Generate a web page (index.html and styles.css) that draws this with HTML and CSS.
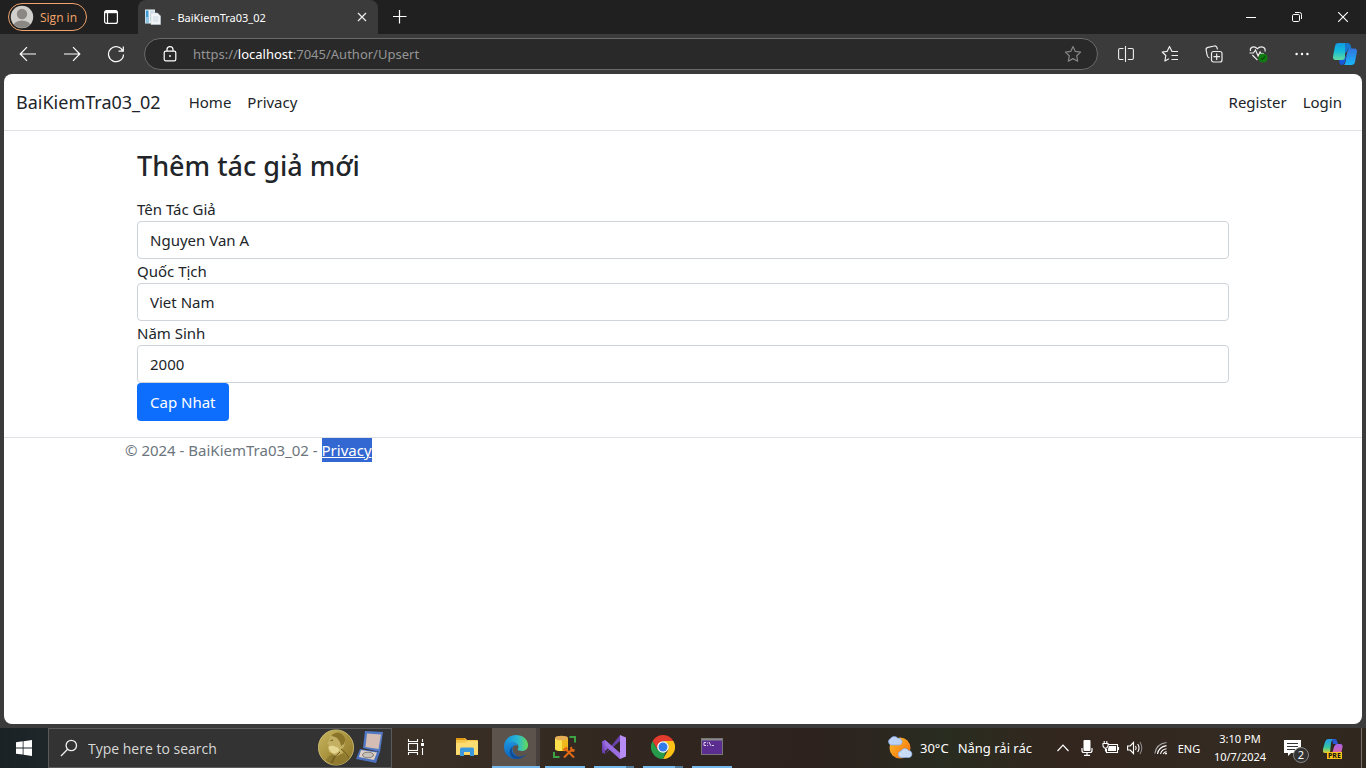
FILE: index.html
```html
<!DOCTYPE html>
<html lang="vi">
<head>
<meta charset="utf-8">
<title>- BaiKiemTra03_02</title>
<link rel="stylesheet" href="styles.css">
</head>
<body>
<div class="desktop">
  <div class="tabstrip">
    <button class="profile">
      <svg width="24" height="24" viewBox="0 0 24 24"><defs><clipPath id="face"><circle cx="12" cy="12" r="11"/></clipPath></defs><circle cx="12" cy="12" r="11.2" fill="#d0cfcb"/><g clip-path="url(#face)" fill="#8b8782"><circle cx="12" cy="9" r="5.2"/><ellipse cx="12" cy="21" rx="8.5" ry="5.6"/></g></svg>
      <span>Sign in</span>
    </button>
    <button class="tab-actions" aria-label="Tab actions">
      <svg width="16" height="16" viewBox="0 0 16 16" fill="none" stroke="#fff" stroke-width="1.2"><rect x="1.600" y="1.600" width="12.800" height="12.800" rx="2"/><path d="M4.500 4v10"/><path d="M2 3h12" stroke-width="2.400"/></svg>
    </button>
    <div class="tab">
      <svg width="16" height="16" viewBox="0 0 16 16"><path d="M0 .5h10v14H0z" fill="#e9f2f7"/><path d="M.8 1.500h2.700v12.500H.8z" fill="#3f9bd2"/><path d="M.8 8h2.700v6H.8z" fill="#8fc6e6"/><path d="M5 1.500h4.500V12H5z" fill="#cfdde6"/><path d="M6 4h6.500L15.500 7v8.500H6z" fill="#f1f5f8" stroke="#c9d3da" stroke-width=".6"/><path d="M8 8h5.500M8 10h5.500M8 12h5.500" stroke="#c5d1d9" stroke-width=".8"/></svg>
      <span class="tab-title">- BaiKiemTra03_02</span>
      <button class="tab-close" aria-label="Close tab"><svg width="10" height="10" viewBox="0 0 10 10" stroke="#eee" stroke-width="1.200"><path d="M1 1l8 8M9 1L1 9"/></svg></button>
    </div>
    <button class="new-tab" aria-label="New tab"><svg width="14" height="14" viewBox="0 0 14 14" stroke="#fff" stroke-width="1.200"><path d="M6.500 0v13.500M0 6.500h13.500"/></svg></button>
    <div class="window-buttons">
      <button aria-label="Minimize"><svg width="10" height="10" viewBox="0 0 10 10" stroke="#fff"><path d="M0 5.500h10"/></svg></button>
      <button aria-label="Restore"><svg width="10" height="10" viewBox="0 0 10 10" fill="none" stroke="#fff"><rect x=".5" y="2.500" width="7" height="7" rx="1.200"/><path d="M3 .5h4.500a2 2 0 0 1 2 2V7"/></svg></button>
      <button aria-label="Close"><svg width="10" height="10" viewBox="0 0 10 10" stroke="#fff" stroke-width="1.100"><path d="M0 0l10 10M10 0L0 10"/></svg></button>
    </div>
  </div>

  <div class="toolbar">
    <button class="tool" aria-label="Back"><svg width="18" height="16" viewBox="0 0 18 16" fill="none" stroke="#fff" stroke-width="1.200"><path d="M17 8H1.500M8 1.200L1.200 8 8 14.800"/></svg></button>
    <button class="tool" aria-label="Forward"><svg width="18" height="16" viewBox="0 0 18 16" fill="none" stroke="#fff" stroke-width="1.200"><path d="M1 8h15.500M10 1.200L16.800 8 10 14.800"/></svg></button>
    <button class="tool" aria-label="Refresh"><svg width="18" height="18" viewBox="0 0 18 18" fill="none" stroke="#fff" stroke-width="1.200"><path d="M15.800 6A7.500 7.500 0 1 0 16.500 9.400M16.300 1.500V6.200h-4.800"/></svg></button>
    <div class="address">
      <svg width="14" height="16" viewBox="0 0 14 16" fill="none" stroke="#fff" stroke-width="1.200"><rect x="1.200" y="5.200" width="11.600" height="9.600" rx="1.600"/><path d="M4 5V3.600a3 3 0 0 1 6 0V5"/><circle cx="7" cy="10" r=".9" fill="#fff" stroke="none"/></svg>
      <span class="url">https://<b>localhost</b>:7045/Author/Upsert</span>
      <button class="star" aria-label="Add to favorites"><svg width="18" height="18" viewBox="0 0 18 18" fill="none" stroke="#858585" stroke-width="1.200" stroke-linejoin="round"><path d="M9 1.500l2.300 4.900 5.300.7-3.900 3.700 1 5.400L9 13.600l-4.700 2.600 1-5.400L1.400 7.100l5.300-.7z"/></svg></button>
    </div>
    <div class="tools-right">
      <button class="tool" aria-label="Split screen"><svg width="16" height="16" viewBox="0 0 16 16" fill="none" stroke="#eee" stroke-width="1.100"><path d="M5.500 2.500H2A1.400 1.400 0 0 0 .6 3.900v8.200A1.400 1.400 0 0 0 2 13.500h3.500M9.800 2.500H14a1.400 1.400 0 0 1 1.400 1.400v8.200a1.400 1.400 0 0 1-1.400 1.400H9.800M7.500 0v16"/></svg></button>
      <button class="tool" aria-label="Favorites"><svg width="18" height="18" viewBox="0 0 18 18" fill="none" stroke="#eee" stroke-width="1.200" stroke-linejoin="round"><path d="M11 6.400L8.500 1.500 6.200 6.300l-5 .7 3.600 3.500-.9 5.500 4-2.200M10.500 6.500H17M10.500 10.500H17M10.500 14.500H17"/></svg></button>
      <button class="tool" aria-label="Collections"><svg width="18" height="18" viewBox="0 0 18 18" fill="none" stroke="#eee" stroke-width="1.200"><rect x="6.500" y="6.500" width="10.500" height="10.500" rx="2"/><path d="M11.700 8.500v6.500M8.500 11.700H15M4.500 13C3 12.500 2.400 11.500 2.100 10L1.100 5C.9 3.500 1.600 2.700 2.900 2.400L9.500 1C11 .7 12 1.900 12.500 4.500"/></svg></button>
      <button class="tool" aria-label="Browser essentials"><svg width="20" height="18" viewBox="0 0 20 18" fill="none" stroke="#eee" stroke-width="1.200"><path d="M2.500 6C1.500 2 6 .4 9.500 3.700 12.500 .4 18 2 17 6.500M4.300 10L9.500 15.200M1.500 8h4l2-3 2.600 6 2-4 1 1.500H16"/><circle cx="15" cy="13" r="4.600" fill="#107c10" stroke="none"/><path d="M13 13.200l1.400 1.300 2.600-3" stroke="#0a4a0a"/></svg></button>
      <button class="tool" aria-label="Settings and more"><svg width="14" height="4" viewBox="0 0 14 4" fill="#fff"><circle cx="1.600" cy="2" r="1.200"/><circle cx="7" cy="2" r="1.200"/><circle cx="12.400" cy="2" r="1.200"/></svg></button>
      <button class="tool copilot" aria-label="Copilot"><svg width="24" height="24" viewBox="0 0 24 24"><defs><linearGradient id="cpA" x2="0" y2="1"><stop stop-color="#1199e0"/><stop offset=".45" stop-color="#13b9da"/><stop offset="1" stop-color="#63dba0"/></linearGradient><linearGradient id="cpB" x2="0" y2="1"><stop stop-color="#3173dc"/><stop offset="1" stop-color="#18b7fb"/></linearGradient></defs><path d="M9 10l4-9h1.500q2.500 0 3.200 2.500L18.500 7H15l-2 4z" fill="#1577cf"/><path d="M6 17h5l3-5-2 8q-1 3-3 3-2 0-2.500-2z" fill="#1558dc"/><path d="M5.500 1H13q-1 .6-1 3v11q0 3-3 3H2.500Q-.5 18 .1 14L2 4Q2.700 1 5.500 1z" fill="url(#cpA)"/><path d="M18.500 23H11q1-.6 1.500-3l2-11Q15 6.500 17.500 6.500h4Q24.500 6.500 23.900 10L22 20Q21.300 23 18.500 23z" fill="url(#cpB)"/></svg></button>
    </div>
  </div>

  <div class="page">
    <header class="navbar">
      <a class="brand" href="#">BaiKiemTra03_02</a>
      <nav class="nav-main"><a href="#">Home</a><a href="#">Privacy</a></nav>
      <nav class="nav-user"><a href="#">Register</a><a href="#">Login</a></nav>
    </header>
    <main class="container">
      <form class="author-form">
        <h1>Thêm tác giả mới</h1>
        <label for="name">Tên Tác Giả</label>
        <input id="name" type="text" value="Nguyen Van A">
        <label for="country">Quốc Tịch</label>
        <input id="country" type="text" value="Viet Nam">
        <label for="born">Năm Sinh</label>
        <input id="born" type="text" value="2000">
        <button class="submit" type="button">Cap Nhat</button>
      </form>
    </main>
    <footer class="footer"><div class="container">© 2024 - BaiKiemTra03_02 - <a href="#">Privacy</a></div></footer>
  </div>

  <div class="taskbar">
    <button class="start" aria-label="Start"><svg width="16" height="16" viewBox="0 0 16 16" fill="#fff"><path d="M0 2.200L6.700 1.300v6.200H0zM7.500 1.200L16 0v7.500H7.500zM0 8.400h6.700v6.200L0 13.700zM7.500 8.400H16V16l-8.500-1.200z"/></svg></button>
    <label class="search">
      <svg width="18" height="18" viewBox="0 0 18 18" fill="none" stroke="#eee" stroke-width="1.300"><circle cx="11.300" cy="6.500" r="5.200"/><path d="M7.600 10.300L1 17"/></svg>
      <input type="text" placeholder="Type here to search" aria-label="Search">
      <svg width="66" height="38" viewBox="0 0 66 38"><defs><linearGradient id="gold" x2="1" y2="1"><stop stop-color="#c9b860"/><stop offset=".5" stop-color="#a8923e"/><stop offset="1" stop-color="#8d762b"/></linearGradient></defs><circle cx="18" cy="18.500" r="17.600" fill="url(#gold)" stroke="#d6c776" stroke-width=".8"/><path d="M8 31q3-5 7-6l5-3 7 4 4 4q-5 6-14 6-6-1-9-5z" fill="#8f7a30"/><path d="M12 7q3-4 9-3 6 1 6 8 0 5-3 8l1 4-8 4-3-4-3-1-1-4 1-3-2-1 2-4z" fill="#c3b062"/><path d="M15 5q5-3 9 0 5 4 2 10l-3 2-1-4-3-4q-3-2-6-2z" fill="#8b752b"/><path d="M10.500 17.500l4-1 5 2 2 2q-2 4-6 4-4-1-5-7z" fill="#e5d792"/><path d="M12.500 11.500l2.500-.3" stroke="#705b1d"/><path d="M23 20q6 4 8 9M22 23q-6 4-8 11M17 26l-4 8" stroke="#705b1d" stroke-width="1" fill="none"/><path d="M47 2l18 1-3 20-17-4z" fill="#5279c5"/><path d="M49 4.500l14 1-2.500 14.500L47.500 18z" fill="#d3bdb4"/><path d="M42 20l20 3-4 11-20-4z" fill="#4b70bd"/><path d="M43 21l16 2.500-3 7.500-15-3z" fill="#dfd0c7"/><ellipse cx="50" cy="26" rx="5.500" ry="2.800" fill="#c8c2ba" stroke="#857f7a"/></svg>
    </label>
    <button class="task task-view" aria-label="Task View"><svg width="18" height="16" viewBox="0 0 18 16" fill="none" stroke="#fff" stroke-width="1.100"><rect x="1.500" y="4.500" width="9" height="7"/><path d="M1.500 0v2.500h9V0M1.500 16v-2.500h9V16M15.500 0v3M15.500 9v7"/><path d="M14 4h3v3h-3z" fill="#fff" stroke="none"/></svg></button>
    <button class="task" aria-label="File Explorer"><svg width="22" height="20" viewBox="0 0 22 20"><path d="M0 2q0-1 1-1h8l2 2h10q1 0 1 1v14H0z" fill="#f6c64a"/><path d="M0 2q0-1 1-1h7l1.500 2H0z" fill="#de9a12"/><path d="M0 6l9-.5L12 4h10v13.500H0z" fill="#ffdc72"/><path d="M4 19v-7q0-1.500 1.500-1.500h11q1.500 0 1.500 1.500v7h-4v-4H8v4z" fill="#3c98dd"/></svg></button>
    <button class="task running active" aria-label="Microsoft Edge"><svg width="24" height="24" viewBox="0 0 24 24"><defs><linearGradient id="edA" x2="1"><stop stop-color="#168bdc"/><stop offset=".55" stop-color="#27b6d5"/><stop offset="1" stop-color="#65dd57"/></linearGradient><linearGradient id="edB" x2="0" y2="1"><stop stop-color="#1c91df"/><stop offset="1" stop-color="#0b62bb"/></linearGradient></defs><path d="M0 12C0 4.500 5.600 0 12 0s12 4 12 10c0 4-3 6-6.500 6-3 0-4.400-1.200-3.500-2.500 1.500-2.500-1-6-5-6-4.500 0-8 2-9 4.500z" fill="url(#edA)"/><path d="M0 12C.7 8.500 4.500 6.500 8.500 7c2.500.3 4.500 2 5.200 4-2.700-2-5.200-.2-5.200 3 0 4 4 8 8.500 8.500C8 27 0 20 0 12z" fill="url(#edB)"/><path d="M9.500 10.500C6 14 8 20.500 14 21.600c3.500.6 6.500-.8 8.500-3.300-2.300 4.400-7 6-10.500 5.700-6-1-9-9-2.500-13.500z" fill="#124c94"/></svg></button>
    <button class="task running" aria-label="SQL Server Management Studio"><svg width="24" height="24" viewBox="0 0 24 24"><path d="M2 3v11q0 2 6.500 2t6.500-2V3z" fill="#f9e04c"/><path d="M9 4v12q6 0 6-2V3z" fill="#f0b91b"/><ellipse cx="8.500" cy="3" rx="6.500" ry="2.300" fill="#e5ad55"/><path d="M16.500 2H22v5.500M1 17v5h5.500" fill="none" stroke="#3ca344" stroke-width="2"/><path d="M12 13.500l9 9M19 14.500l-8 8" stroke="#e36a15" stroke-width="2"/><path d="M9.500 14.500l4-3 1.500 2-3.500 3zM17 12.500l2-1 .5 2.500 2.500.5-1 2.500-3-.5z" fill="#e36a15"/></svg></button>
    <button class="task running grouped" aria-label="Visual Studio"><svg width="24" height="24" viewBox="0 0 24 24"><path d="M0 6.500L3 5l4 4-4 3v4l-3 1.500z" fill="#7145b8"/><path d="M3 16V19L0 17.500V15zM3 19l4-3.500L18 6V0z" fill="#6a42ad"/><path d="M0 6.500L3 5 18 18v6L6 13.500 3 16z" fill="#8a5bd0"/><path d="M3 5L18 18v6L3 10z" fill="#9a6ee0"/><path d="M18 0l6 2.500v19L18 24z" fill="#b88cf5"/></svg></button>
    <button class="task running grouped" aria-label="Google Chrome"><svg width="24" height="24" viewBox="0 0 24 24"><path d="M1.600 6A12 12 0 0 1 22.400 6H12z" fill="#e33b2e"/><path d="M22.400 6A12 12 0 0 1 12 24l5.200-9V6z" fill="#fbc116"/><path d="M12 24A12 12 0 0 1 1.600 6l5.200 9 8 2z" fill="#269c4b"/><path d="M1.600 6L7 15l5-9z" fill="#e33b2e"/><path d="M12 6h10.400L17 9z" fill="#fbc116"/><circle cx="12" cy="12" r="5.800" fill="#fff"/><circle cx="12" cy="12" r="4.500" fill="#327bea"/></svg></button>
    <button class="task running" aria-label="Command Prompt"><svg width="22" height="18" viewBox="0 0 22 18"><rect x=".5" y=".5" width="21" height="16" fill="#5c2d91" stroke="#777"/><path d="M1 1h20v1.500H1z" fill="#8a8a8a"/><path d="M5 4.500H3v3h2M6.500 4.500v1M6.500 7v.8M8 4l2 4M11 7.500h2" fill="none" stroke="#e8e0f0" stroke-width=".9"/></svg></button>
    <div class="tray">
      <button class="weather"><svg width="26" height="24" viewBox="0 0 26 24"><defs><linearGradient id="sun" x2="1" y2="1"><stop stop-color="#ffbf26"/><stop offset="1" stop-color="#f26a12"/></linearGradient></defs><circle cx="13" cy="12" r="10.500" fill="url(#sun)"/><path d="M4 9a3.500 3.500 0 0 1-.5-6.500A4.500 4.500 0 0 1 11 2.500a3.300 3.300 0 0 1 1.500 6.500z" fill="#bcd2f5" stroke="#86a9e3" stroke-width=".7"/><path d="M14 21.500a3.300 3.300 0 0 1 0-6.500 4.300 4.300 0 0 1 7.500-.5 3.600 3.600 0 0 1 1 7z" fill="#c7daf8" stroke="#86a9e3" stroke-width=".7"/></svg><span>30°C</span><span class="condition">Nắng rải rác</span></button>
      <button class="tray-icon" aria-label="Show hidden icons"><svg width="12" height="8" viewBox="0 0 12 8" fill="none" stroke="#fff" stroke-width="1.200"><path d="M.5 7L6 1.200 11.500 7"/></svg></button>
      <button class="tray-icon" aria-label="Microphone"><svg width="12" height="16" viewBox="0 0 12 16"><rect x="2.500" y="0" width="7" height="11" rx="1" fill="#fff"/><path d="M1 8v2.500q0 2 2 2h6q2 0 2-2V8M6 12.500V15M3 15.300h6" fill="none" stroke="#fff" stroke-width="1.200"/></svg></button>
      <button class="tray-icon" aria-label="Battery"><svg width="18" height="14" viewBox="0 0 18 14"><path d="M6 3.500h9.500v8h-11V8M16.500 6v3" fill="none" stroke="#fff" stroke-width="1.100"/><path d="M7 5h7v5H6V8z" fill="#fff"/><path d="M1 2.500h5v2.700q-1 2-2.500 2T1 5.200zM2.200 0v2M4.800 0v2M3.500 7v3.500" fill="none" stroke="#fff" stroke-width="1.100"/></svg></button>
      <button class="tray-icon" aria-label="Volume"><svg width="16" height="14" viewBox="0 0 16 14" fill="none" stroke="#fff" stroke-width="1.100"><path d="M.6 5h2.600L6.500 1.500v11L3.200 9H.6zM8.500 5q1.400 2 0 4M10.700 3q2.700 4 0 8"/><path d="M13 1q3.500 6 0 12" stroke="#888"/></svg></button>
      <button class="tray-icon wifi" aria-label="Wi-Fi"><svg width="14" height="14" viewBox="0 0 14 14" fill="none" stroke="#fff" stroke-width="1.100"><path d="M.8 12.500Q2 3 12.500 1.500" stroke="#aaa"/><path d="M3.500 13Q4.500 6 12.500 4.600M6.500 13Q7.500 8.500 12.500 7.700M9.300 13Q10 11 12.500 10.500"/><circle cx="12" cy="12.500" r="1" fill="#fff" stroke="none"/></svg></button>
      <button class="lang">ENG</button>
      <button class="clock"><span>3:10 PM</span><span>10/7/2024</span></button>
      <button class="notify" aria-label="Notifications"><svg width="18" height="18" viewBox="0 0 18 18"><path d="M0 1h17v13H7l-3 3v-3H0z" fill="#fff"/><path d="M3 4.500h11M3 7.500h11M3 10.500h8" stroke="#333" stroke-width="1.100"/></svg><span class="badge">2</span></button>
      <button class="pre" aria-label="Copilot preview"><svg width="20" height="18" viewBox="0 0 20 18"><defs><linearGradient id="preA" x2="0" y2="1"><stop stop-color="#2498ec"/><stop offset=".6" stop-color="#36c8a0"/><stop offset="1" stop-color="#e3cf29"/></linearGradient><linearGradient id="preB" x2="0" y2="1"><stop stop-color="#aa62ed"/><stop offset="1" stop-color="#f26a79"/></linearGradient></defs><path d="M9 0h3q1.500 0 2 2l1 3h-5z" fill="#2a58d4"/><path d="M5 0h5q-1.500 1-2 4L7 14H2q-3 0-2-4L2 3q1-3 3-3z" fill="url(#preA)"/><path d="M14 5h3q3 0 2.500 3L18 15q-1 3-3 3H8l3-10q1-3 3-3z" fill="url(#preB)"/></svg><span class="pre-label">PRE</span></button>
    </div>
  </div>
</div>
</body>
</html>
```
FILE: styles.css
```css
* { box-sizing: border-box; }
body { margin: 0; font-family: "Noto Sans", "Open Sans", sans-serif; }
button { padding: 0; border: 0; background: none; color: inherit; font: inherit; display: flex; align-items: center; justify-content: center; flex: none; }
svg { display: block; flex: none; }

.desktop { display: flex; flex-direction: column; height: 100vh; background: #3b3b3b; }

/* Browser tabs */
.tabstrip { display: flex; align-items: stretch; height: 34px; flex: none; background: #202020; color: #fff; font-size: 12px; }
.profile { align-self: center; width: 79px; height: 28px; margin-left: 8px; padding-left: 1px; gap: 6px; justify-content: flex-start; border: 1px solid #f0a16c; border-radius: 14px; color: #f5a46c; font-family: "Open Sans", sans-serif; }
.tab-actions { width: 48px; }
.tab { display: flex; align-items: center; width: 240px; margin-left: 3px; padding: 0 8px 0 7px; gap: 10px; background: #3b3b3b; border-radius: 8px 8px 0 0; }
.tab-title { flex: 1; font-size: 11px; white-space: nowrap; }
.tab-close { width: 16px; height: 16px; }
.new-tab { width: 44px; }
.window-buttons { display: flex; margin-left: auto; }
.window-buttons button { width: 46px; }

/* Address bar */
.toolbar { display: flex; align-items: center; height: 40px; flex: none; padding: 0 0 0 6px; }
.tool { width: 44px; height: 32px; }
.address { display: flex; align-items: center; flex: 1; height: 32px; margin-left: 6px; padding: 0 15px 0 18px; gap: 16px; background: #292929; border: 1px solid #6a6a6a; border-radius: 16px; }
.url { flex: 1; font-size: 13px; color: #959595; }
.url b { font-weight: 400; color: #fff; }
.tools-right { display: flex; margin-left: 6px; }
.copilot { width: 42px; }

/* Web page */
.page { flex: 1; min-height: 0; overflow: hidden; margin: 0 4px 4px; background: #fff; border-radius: 8px; color: #212529; font-size: 15px; line-height: 24px; }
.navbar { display: flex; align-items: center; height: 57px; padding: 0 12px; border-bottom: 1px solid #dee2e6; }
.navbar a { color: #212529; text-decoration: none; }
.navbar .brand { margin-right: 20px; font-size: 18px; line-height: 30px; }
.nav-main, .nav-user { display: flex; }
.nav-main a, .nav-user a { padding: 0 8px; }
.nav-user { margin-left: auto; }
.container { max-width: 1140px; margin: 0 auto; padding: 0 12px; }
.author-form { display: flex; flex-direction: column; align-items: flex-start; padding: 16px 12px; }
.author-form h1 { margin: 0 0 12px; font-size: 27px; line-height: 38px; font-weight: 500; }
.author-form input { width: 100%; height: 38px; padding: 6px 12px; border: 1px solid #ced4da; border-radius: 4px; background: #fff; color: #212529; font: inherit; }
.submit { height: 38px; padding: 0 13px; border-radius: 4px; background: #0d6efd; color: #fff; }
.footer { border-top: 1px solid #dee2e6; color: #6c757d; }
.footer a { display: inline-block; background: #3367d1; color: #fff; }

/* Taskbar */
.taskbar { display: flex; height: 40px; flex: none; background: linear-gradient(90deg, #1b2226 0, #20272a 4%, #3a3026 30%, #30251f 50%, #2d221e 60%, #292c20 69%, #33261f 78%, #332a22 90%, #30271f 100%); color: #fff; font-size: 12px; }
.start { width: 48px; }
.search { display: flex; align-items: center; width: 344px; padding: 0 7px 0 11px; gap: 10px; background: #333; border: 1px solid #5b5b5b; }
.search input { flex: 1; min-width: 0; padding: 0; border: 0; background: none; color: #fff; font: 14px "Open Sans", sans-serif; }
.search input::placeholder { color: #d8d8d8; opacity: 1; }
.task { width: 48px; margin-right: 1px; border-bottom: 2px solid transparent; }
.task-view { margin-right: 3px; }
.running { width: 40px; margin: 0 5px 0 4px; border-color: #76b9ed; }
.running.active { width: 48px; margin: 0 1px 0 0; background: linear-gradient(90deg, #5c534d 44px, #47403c 44px); }
.grouped { border-image: linear-gradient(90deg, #76b9ed 31px, #527b9c 31px) 2; }
.tray { display: flex; margin-left: auto; margin-right: 4px; border-right: 1px solid #79736d; }
.weather { width: 164px; justify-content: flex-start; gap: 7px; font-size: 13px; white-space: nowrap; }
.condition { margin-left: 2px; }
.tray-icon { width: 24px; }
.wifi { width: 28px; }
.lang { width: 28px; font-size: 11px; }
.clock { width: 74px; flex-direction: column; font-size: 11px; line-height: 18px; }
.notify { position: relative; width: 32px; }
.badge { position: absolute; right: 0; bottom: 5px; width: 16px; height: 16px; border: 1px solid #888; border-radius: 8px; background: #333; font-size: 11px; line-height: 14px; }
.pre { position: relative; width: 48px; margin-right: 4px; }
.pre-label { position: absolute; left: 18px; bottom: 9px; padding: 0 1px; background: #fcc419; color: #111; font-size: 7px; line-height: 7px; font-weight: 700; }
```
